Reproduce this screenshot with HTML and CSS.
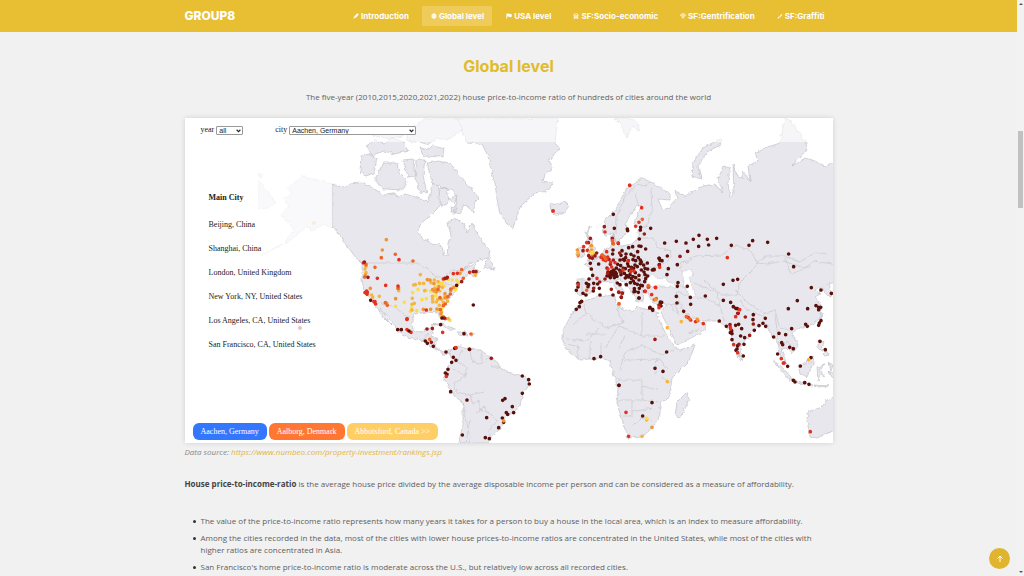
FILE: index.html
```html
<!DOCTYPE html>
<html lang="en">
<head>
<meta charset="utf-8">
<title>GROUP8 - Global level</title>
<link rel="stylesheet" href="styles.css">
</head>
<body>
<div class="page">
<header class="header">
  <div class="container header-row">
    <a class="logo" href="#top">GROUP8</a>
    <nav class="nav">
      <a href="#introduction"><svg viewBox="0 0 16 16"><path d="M1 15l1-5 3.500 3.500zM3 9l7.500-7.500q2-1 3.500.5t.5 3.500L7 13z"/></svg>Introduction</a>
      <a class="active" href="#global"><svg viewBox="0 0 16 16"><circle cx="8" cy="8" r="7" opacity=".6"/><path class="line" d="M8 1v14M1 8h14M3 4h10M3 12h10M8 1q-7 7 0 14M8 1q7 7 0 14"/></svg>Global level</a>
      <a href="#usa"><svg viewBox="0 0 16 16"><path d="M1 1h2v1q3-2 6 0t6 0v8q-3 2-6 0t-6 0v5H1z"/></svg>USA level</a>
      <a href="#socio"><svg viewBox="0 0 16 16"><path class="line" d="M2 6q0-4 3-4h6q3 0 3 4M1 6h14M2 9h12M2 12h12M1 15h14M4 6v8M8 6v8M12 6v8"/></svg>SF:Socio-economic</a>
      <a href="#gentrification"><svg viewBox="0 0 16 16"><path class="line" d="M4 2h8l3 4-7 8-7-8zM1 6h14M5 6l3 8 3-8-3-4z"/></svg>SF:Gentrification</a>
      <a href="#graffiti"><svg viewBox="0 0 16 16"><path d="M15 1q-5 2-9 8l2 2q5-4 7-10zM5 10q-3 0-3 3l-1 2q5 0 6-3z"/></svg>SF:Graffiti</a>
    </nav>
  </div>
</header>
<main class="container" id="global">
  <h2>Global level</h2>
  <p class="subtitle">The five-year (2010,2015,2020,2021,2022) house price-to-income ratio of hundreds of cities around the world</p>
  <section class="map-card">
    <svg class="map" viewBox="185 118 648 325" role="img" aria-label="World map of price-to-income ratios">
      <defs>
        <filter id="coast" x="0" y="0" width="100%" height="100%"><feTurbulence type="fractalNoise" baseFrequency=".22" numOctaves="2" seed="4"/><feDisplacementMap in="SourceGraphic" scale="4" xChannelSelector="R" yChannelSelector="G"/></filter>
      </defs>
      <g filter="url(#coast)">
        <g class="land">
          <path d="M332 184L344 188 350 183 362 182 371 187 384 195 394 194 400 197 405 194 413 196 427 202 431 194 433 182 438 187 442 203 436 210 430 216 420 224 418 234 426 240 433 243 442 246 444 256 447 256 448 244 451 236 448 223 455 218 463 223 467 233 472 223 476 231 482 241 490 251 488 258 476 261 468 265 463 270 476 263 473 269 481 271 474 277 469 274 462 280 458 285 453 295 448 300 443 307 440 312 445 321 441 319 438 313 427 312 415 314 412 320 413 330 421 333 426 329 433 328 431 336 437 338 435 347 443 352 453 349 451 355 443 354 433 348 425 342 417 339 407 337 402 335 396 327 386 315 380 308 391 325 383 317 376 306 369 298 364 290 362 280 362 264 357 259 347 246 337 231 332 228 324 224 312 231 307 226 294 238 262 255 284 243 294 229 289 224 281 214 289 206 284 199 292 194 287 188 302 176z"/>
          <path d="M258 179L276 204 268 208 258 209zM258 173l5 2-3 4zM361 156l8-2 8 4-3 15-8 3-6-5zM376 177l8-14 13 0 2 10 8 8-4 9-19-1-8-6zM366 146l10-6 8 3 8-5 12 4 4 9-14 3-10-3-12 4zM372 135l16-8 12 4 8-7-5 12-18 3zM403 160l10-1 2 17-7 1zM416 160l9 0-2 15 4 18-7-1-5-14zM420 147l8 3 4-4 12 2-1 9-20-1zM408 128l20-10 40 0-5 12-14 9-12 0-10 5-20-4zM427 163l11-2 12 2 10 13 19 22-5 5 0 9-10-8-4 10-6-2 3-9-3-12-13-4-9-4zM440 188l7 0 2 14-7 5-3-10zM448 198l9-2-2 8zM451 208l5-1 0 6-4 0zM483 268l6-11 6 12-5-1z"/>
          <path d="M457 118L467 143 482 144 488 156 492 173 495 183 497 199 500 214 507 224 513 228 518 213 523 204 535 193 547 191 553 183 543 181 545 175 553 168 549 160 555 153 560 149 555 143 558 118z"/>
          <path d="M550 204l7 0 8-2 4 4-6 8-8 0-4-3zM590 226l-4 6 2 6 5 1-1 5 3 5 1 6 2 3-5 1-6 2 3-6-3-4 3-5-4-7zM577 250l5-4 3 4-2 7-6 1zM615 118l7 9 5 11 5-12 7 6 0-8-8-6z"/>
          <path d="M455 347L460 346 470 349 480 350 486 354 492 358 498 363 500 368 508 372 523 376 529 380 528 387 523 393 520 405 513 413 505 417 503 423 497 432 490 439 487 443 459 443 461 432 463 420 463 402 455 397 447 383 443 378 445 372 452 362 450 353z"/>
          <path d="M603 230L605 220 615 210 622 197 628 187 638 181 642 178 653 183 670 194 670 200 658 199 663 211 668 208 677 198 675 191 685 196 703 186 715 184 723 193 718 179 723 166 730 168 728 183 730 198 734 193 733 164 737 176 743 179 743 171 750 181 748 166 758 161 755 153 765 148 780 143 785 118 793 123 806 143 807 149 792 166 805 158 815 161 825 166 836 161 836 282 828 284 832 297 826 294 823 287 815 290 820 294 815 297 822 308 820 318 813 324 797 329 792 333 798 346 792 354 786 348 781 349 787 364 781 358 778 343 772 336 767 326 762 323 752 332 743 343 739 357 735 348 729 328 717 321 703 321 690 317 683 311 693 322 698 321 707 325 703 331 692 338 677 345 670 331 661 313 666 304 653 303 648 293 642 291 643 302 638 302 630 289 620 279 615 280 624 291 621 296 613 284 606 281 598 283 592 292 585 296 577 294 577 279 592 279 592 269 584 264 591 262 598 258 604 250 611 246 610 237 614 234 616 243 621 246 632 244 638 238 638 230 648 226 637 227 634 224 637 217 641 206 637 205 632 213 626 222 627 231 622 238 617 243 612 233 605 236z"/>
          <path d="M583 301L598 297 614 295 618 307 632 312 637 307 653 311 659 313 657 316 667 336 676 348 680 350 695 345 689 361 672 378 670 397 660 403 660 415 652 428 642 437 628 438 622 420 617 403 618 387 613 373 610 361 600 358 580 360 570 353 563 343 563 330 573 312zM687 392l2 8-8 17-6-1 2-14z"/>
          <path d="M692 176l1-13 10-15 19-10-2 7-13 7-9 14 3 13zM773 360l9 7 9 10 1 4-6-4zM792 380l10 2 11 3-1 1-18-4zM814 385l16 1-12 1zM798 368l14-12 3 5-4 7-4 9-7-4zM817 367l8-2-5 4 4 8-4-3-2 7zM818 340l6 2-2 9-4-4zM825 349l4 6-5 1zM829 362l4 3-2 6zM740 352l4 4-2 5-3-4zM828 371l8 3 0 9zM835 395l-8 5-5 7-14 5-1 8 3 17 7 1 18-8zM432 325l11-2 12 7-6 0-7-5zM457 332l9 0 2 4-9-1zM471 334l4 0-3 2zM820 313l3 0-2 7z"/>
        </g>
        <g class="water">
          <path d="M645 280l7-6 8 5 5-2 3 5 10 3-3 2-13-1-11 1zM682 272l8-3 4 5-5 4 4 9 3 10-6 2-5-12z"/>
        </g>
        <g class="borders">
          <path d="M365 263H417L427 268 436 277 444 277 453 270 460 271M376 302L385 305 394 306 403 314 411 318M332 184V228M422 342l6-8M431 345l6-7M443 282l8 2M468 265l-6 8"/>
          <path d="M463 350l-6 12 10 5-1 8-14-6M466 375l-12 9 3 8 13 3 3 9M463 402l8 42M470 350l2 12 10 3 6-8M482 350v15M490 358l3 9 7 0M473 404l6-4 0 8 11 6 8 8M484 392l-14 3M470 420l-4 23M490 414l-6-7-8 6M498 420l-9 11 2 10"/>
          <path d="M616 234l1-18 8-19 12-13 8 2 6-4M635 194l4 12M651 188l1 22-6 16M638 238h15l4 8 14 5-2 10-16 7-13-4-6-16M622 246v19l-16 10M614 258l20 4 12-2M607 251l5 14-6 9M617 264l20 9M592 279l15 3M582 280v16M628 274l5 12M637 273l-1 16M643 275l-4 16M624 258l5-6M644 291l7-6M678 285l9 3"/>
          <path d="M684 262l12-6 26-1 13-10 16 6 6 12 10 1 16-3 22 7 9-7 19 3M682 272l-2-9 8-1M756 264l10-8 20 0 14 6 15-10 12 2M757 265l-16 16-4 14-16 0-18-15M694 283l23 9 3 14 4 14M696 298l9 0 15 8M683 311l-6-19 15 6M661 306l15-2M668 303l11 12M675 303l3 10M735 290l14 14 16 10 10-4 4 16M740 300l6 9 19 8-1 7M775 315l4 29 10-3 4 10M790 330l-10-2M688 333l12-4M798 366l15-4M785 258l6 16 20-8"/>
          <path d="M583 304l3 9-13 12M586 313l20 15 17-5-7-18M599 329l-14 12-18-2M606 334h-20M642 312v24l-23-10-14 22M642 336h22M619 348l6-13M642 345l-18 8-4 18M642 345l20 10 13-6M624 360l36-1 8 10M618 380h24v20H618M642 386l16 4M642 400l16 2M632 400v16h-9M632 412l20-4M634 425l8-8 10 4M660 376l12 8M578 344v15M590 341v18M601 343v15M568 344l12 4M657 358l-2 16"/>
        </g>
      </g>
      <g class="dots" transform="translate(355 230) scale(.3333)">
        <path class="c6" d="M262 160h0M247 168h0M189 178h0M173 188h0M213 181h0M201 209h0M214 206h0M148 217h0M122 229h0M185 242h0M170 234h0M233 213h0M242 197h0M260 238h0M247 241h0M285 271h0M256 160h0M305 151h0M311 158h0M302 179h0M280 148h0M268 168h0M292 150h0M166 244h0M270 148h0M227 183h0M253 158h0"/>
        <path class="c5" d="M206 160h0M194 160h0M181 164h0M176 165h0M228 158h0M238 150h0M209 182h0M172 205h0M178 220h0M171 223h0M171 240h0M237 184h0M254 183h0M73 199h0M30 117h0M33 128h0M131 182h0M50 195h0M53 202h0M240 174h0M249 155h0M262 172h0M232 199h0M233 207h0M244 216h0M253 226h0M260 246h0M258 255h0M280 266h0M361 136h0M196 134h0M278 214h0M248 209h0M270 199h0M259 208h0M265 217h0M233 216h0"/>
        <path class="c4" d="M94 29h0M82 60h0M33 108h0M46 175h0M95 220h0M122 206h0M227 238h0M205 238h0M246 237h0M237 161h0M241 181h0M252 170h0M270 204h0M287 182h0M296 172h0M265 260h0M258 250h0M315 130h0M131 174h0M31 135h0M244 186h0M217 149h0M233 179h0M270 191h0M225 150h0M273 203h0M287 178h0"/>
        <path class="c3" d="M79 83h0M121 73h0M174 93h0M60 112h0M33 103h0M97 226h0M255 203h0M288 177h0M286 192h0M265 227h0M271 222h0M320 119h0M325 145h0M29 141h0M129 175h0M271 266h0M256 239h0M224 328h0M348 312h0M249 178h0M91 218h0M37 189h0M279 200h0"/>
        <path class="c2" d="M132 89h0M25 99h0M67 145h0M92 166h0M129 168h0M35 183h0M30 188h0M37 186h0M62 222h0M60 215h0M156 268h0M156 299h0M168 307h0M214 240h0M263 307h0M295 131h0M307 130h0M265 147h0M344 127h0M36 193h0M57 215h0M275 145h0M302 354h0"/>
        <path class="c1" d="M39 142h0M277 142h0M320 155h0M355 125h0M363 125h0M216 297h0M232 295h0M268 264h0M270 145h0M229 337h0M28 96h0"/>
        <path class="c0" d="M355 225h0M305 166h0M47 211h0M128 299h0M139 299h0M162 303h0M257 284h0M211 333h0M217 340h0M235 349h0M327 311h0M343 358h0M261 264h0"/>
      </g>
      <g class="dots" transform="translate(400 280) scale(.3333)">
        <path class="c0" d="M138 216h0M160 232h0M168 241h0M155 247h0M144 268h0M136 279h0M141 283h0M152 335h0M201 360h0M209 208h0M164 205h0M367 288h0M386 299h0M388 312h0M367 340h0M308 361h0M315 356h0M337 380h0M341 398h0M319 398h0M323 403h0M307 414h0M311 427h0M260 413h0M296 443h0M187 465h0M256 473h0M268 476h0M582 236h0M602 230h0M529 88h0M538 80h0M540 68h0M545 64h0M657 316h0"/>
        <path class="c1" d="M274 235h0"/><path class="c2" d="M168 203h0M139 289h0"/><path class="c4" d="M311 423h0"/>
      </g>
      <g class="dots" transform="translate(615 280) scale(.3333)">
        <path class="c0" d="M325 13h0M271 48h0M325 61h0M347 67h0M226 52h0M227 73h0M217 19h0M189 8h0M187 19h0M184 49h0M186 69h0M206 94h0M105 82h0M113 91h0M155 216h0M120 265h0M144 274h0M111 368h0M83 408h0M12 316h0M313 123h0M355 80h0M362 85h0M367 86h0M415 104h0M414 119h0M451 115h0M444 130h0M452 139h0M432 137h0M418 151h0M334 139h0M362 136h0M371 133h0M380 146h0M350 152h0M346 158h0M351 161h0M377 168h0M389 173h0M351 179h0M368 197h0M366 207h0M363 211h0M387 193h0M385 228h0M476 171h0M492 160h0M512 164h0M530 146h0M500 188h0M503 194h0M524 202h0M535 206h0M488 222h0M518 259h0M556 258h0M588 233h0M535 301h0M540 306h0M569 308h0M582 313h0M589 23h0M618 30h0M649 40h0M547 62h0M520 86h0M578 86h0M603 77h0M611 82h0M617 82h0M611 89h0M618 122h0M613 129h0M611 136h0M572 133h0M577 139h0M615 184h0M631 209h0M136 66h0M135 74h0M140 67h0M138 78h0M60 34h0M70 37h0M72 54h0M19 52h0"/>
        <path class="c1" d="M120 178h0M415 132h0M404 166h0M345 134h0M370 100h0M391 111h0M132 76h0M372 193h0M507 249h0M368 100h0M89 34h0"/>
        <path class="c2" d="M374 89h0M362 110h0M346 142h0M347 147h0M356 194h0M368 218h0M33 397h0M41 469h0M586 455h0M220 113h0M227 120h0M242 125h0M265 131h0M122 23h0M100 21h0M22 40h0M12 36h0M499 236h0M132 83h0M505 249h0M110 44h0"/>
        <path class="c3" d="M214 110h0M224 117h0M248 122h0M118 59h0M124 56h0M12 72h0"/><path class="c4" d="M111 442h0M122 59h0M247 118h0"/>
        <path class="c5" d="M157 143h0M199 125h0M157 305h0M81 469h0M581 239h0M95 420h0"/><path class="c6" d="M95 415h0"/>
      </g>
      <g class="dots" transform="translate(615 116) scale(.3333)">
        <path class="c0" d="M149 381h0M184 376h0M213 381h0M235 370h0M252 358h0M277 370h0M305 367h0M281 387h0M251 391h0M218 406h0M349 388h0M402 388h0M413 374h0M458 379h0M521 414h0M536 452h0M187 446h0M157 420h0M160 458h0M156 476h0M132 427h0M141 434h0M133 446h0M354 493h0M368 490h0M117 461h0"/>
        <path class="c1" d="M195 421h0"/><path class="c2" d="M337 425h0M44 208h0"/>
      </g>
      <g class="dots" transform="translate(565 180) scale(.3333)">
        <path class="c0" d="M145 103h0M148 145h0M187 147h0M188 152h0M227 142h0M226 150h0M257 145h0M223 177h0M191 203h0M203 200h0M222 198h0M228 199h0M242 207h0M171 212h0M218 215h0M183 222h0M198 223h0M207 228h0M168 226h0M144 210h0M143 222h0M175 238h0M182 233h0M178 241h0M165 240h0M158 253h0M167 257h0M190 258h0M199 262h0M204 239h0M212 242h0M220 233h0M229 246h0M226 251h0M226 240h0M247 249h0M236 255h0M188 251h0M210 255h0M217 260h0M240 265h0M229 270h0M267 268h0M262 270h0M248 267h0M206 265h0M193 272h0M211 278h0M222 286h0M178 280h0M168 284h0M185 287h0M195 284h0M204 290h0M199 295h0M190 291h0M212 293h0M222 300h0M205 303h0M196 308h0M209 310h0M217 313h0M181 294h0M170 273h0M181 266h0M175 265h0M163 270h0M154 264h0M146 270h0M140 274h0M151 276h0M144 281h0M154 281h0M147 287h0M138 285h0M131 287h0M126 288h0M136 293h0M148 293h0M156 289h0M134 280h0M129 276h0M240 284h0M248 288h0M242 296h0M239 305h0M237 276h0M283 235h0M285 241h0M76 250h0M101 252h0M79 267h0M83 286h0M72 297h0M64 310h0M71 314h0M69 320h0M39 310h0M39 321h0M34 331h0M54 340h0M63 345h0M86 310h0M98 312h0M103 325h0M85 333h0M105 345h0M144 345h0M157 309h0M165 314h0M184 314h0M208 326h0M207 335h0M222 354h0M223 325h0M227 316h0M232 317h0M254 384h0M263 388h0"/>
        <path class="c1" d="M70 188h0M76 175h0M118 140h0M238 162h0M71 227h0M75 233h0M82 235h0M90 228h0M95 219h0M54 212h0M160 190h0M142 175h0M145 240h0M136 253h0M120 297h0M86 325h0M104 306h0M128 280h0M139 328h0M161 337h0M172 339h0M169 351h0M190 242h0M164 219h0M132 238h0M126 264h0M199 267h0M283 255h0M84 224h0M166 276h0"/>
        <path class="c2" d="M194 16h0M230 83h0M222 127h0M212 139h0M120 156h0M56 200h0M65 188h0M67 211h0M144 190h0M160 189h0M125 215h0M108 232h0M115 239h0M126 238h0M137 246h0M150 248h0M189 243h0M140 261h0M129 268h0M174 270h0M197 275h0M207 273h0M96 295h0M40 314h0M241 334h0M251 320h0M271 322h0M284 262h0M113 230h0M122 242h0M111 226h0M119 234h0M128 231h0"/>
        <path class="c3" d="M232 118h0M143 182h0M145 192h0M118 230h0M122 237h0M112 225h0M65 331h0M250 317h0M162 371h0M40 226h0"/><path class="c4" d="M79 197h0M37 210h0M80 210h0M40 224h0"/><path class="c5" d="M39 218h0M76 215h0M82 222h0"/><path class="c6" d="M80 218h0M84 216h0"/>
      </g>
      <path class="c5 dot" d="M314 223h0"/><path class="c1 dot" d="M300 328h0"/><path class="c2 dot" d="M553 211h0"/><path class="c2 dot" d="M407 319h0"/>
    </svg>
    <div class="filters">
      <label for="year">year</label>
      <span class="pick year"><select id="year"><option>all</option></select><svg viewBox="0 0 8 6"><path d="M1 1l3 3 3-3"/></svg></span>
      <label class="city-label" for="city">city</label>
      <span class="pick city"><select id="city"><option>Aachen, Germany</option></select><svg viewBox="0 0 8 6"><path d="M1 1l3 3 3-3"/></svg></span>
    </div>
    <div class="cities">
      <h3>Main City</h3>
      <ul>
        <li>Beijing, China</li>
        <li>Shanghai, China</li>
        <li>London, United Kingdom</li>
        <li>New York, NY, United States</li>
        <li>Los Angeles, CA, United States</li>
        <li>San Francisco, CA, United States</li>
      </ul>
    </div>
    <div class="chips">
      <button class="blue" type="button">Aachen, Germany</button>
      <button class="orange" type="button">Aalborg, Denmark</button>
      <button class="gold" type="button">Abbotsford, Canada &gt;&gt;</button>
    </div>
  </section>
  <p class="source">Data source: <a href="#source">https://www.numbeo.com/property-investment/rankings.jsp</a></p>
  <p class="definition"><strong>House price-to-income-ratio</strong> is the average house price divided by the average disposable income per person and can be considered as a measure of affordability.</p>
  <ul class="notes">
    <li>The value of the price-to-income ratio represents how many years it takes for a person to buy a house in the local area, which is an index to measure affordability.</li>
    <li>Among the cities recorded in the data, most of the cities with lower house prices-to-income ratios are concentrated in the United States, while most of the cities with higher ratios are concentrated in Asia.</li>
    <li>San Francisco's home price-to-income ratio is moderate across the U.S., but relatively low across all recorded cities.</li>
  </ul>
</main>
<a class="to-top" href="#top" aria-label="Back to top"><svg viewBox="0 0 16 16"><path d="M8 14V3M3 7l5-5 5 5"/></svg></a>
</div>
<div class="scrollbar"><i class="up"></i><div class="track"><div class="thumb"></div></div><i class="down"></i></div>
</body>
</html>
```
FILE: styles.css
```css
* { box-sizing: border-box; }
body {
  margin: 0;
  display: flex;
  height: 100vh;
  overflow: hidden;
  background: #f1f1f1;
  color: #606060;
  font: 8px/12px "Open Sans", "Noto Sans", sans-serif;
}
a { color: inherit; text-decoration: none; }
.page { flex: 1; min-width: 0; position: relative; overflow: hidden; }
.container { max-width: 648px; margin: 0 auto; }
.header { background: #e8be33; color: #fff; }
.header-row { display: flex; align-items: center; justify-content: space-between; height: 32px; }
.logo { font: 800 12px/16px Inter, sans-serif; }
.nav { display: flex; gap: 5px; font-family: Inter, sans-serif; font-weight: 700; }
.nav a { display: flex; align-items: center; gap: 2px; height: 20px; padding: 0 8px 0 9px; border-radius: 1px; white-space: nowrap; }
.nav .active { background: #eecb5b; }
.nav svg { width: 6px; height: 6px; fill: #fff; }
.nav .line { fill: none; stroke: #fff; stroke-width: 1.5; }
h2 { margin: 24px 0 15px; color: #e0bc2d; font: 700 16px/20px Inter, sans-serif; text-align: center; }
.subtitle { margin: 0 0 15px; text-align: center; }
.map-card { position: relative; background: #fff; box-shadow: 0 0 5px rgba(0, 0, 0, .14); overflow: hidden; font-family: "Liberation Serif", serif; color: #222; }
.map { display: block; width: 100%; }
.land { fill: #e8e7ed; stroke: #b9b9bf; stroke-width: .6; }
.water { fill: #fff; stroke: #c3c3c8; stroke-width: .5; }
.borders { fill: none; stroke: #c2c2c8; stroke-width: .6; }
.dots path { stroke-width: 11; }
.dots path, .dot { fill: none; stroke-linecap: round; }
.dot { stroke-width: 4; }
.c0 { stroke: #5a100b; }
.c1 { stroke: #9c1c17; }
.c2 { stroke: #e2321f; }
.c3 { stroke: #ec6529; }
.c4 { stroke: #ef9433; }
.c5 { stroke: #f4b63e; }
.c6 { stroke: #fbdd4c; }
.filters { position: absolute; inset: 0 0 auto; display: flex; align-items: center; height: 24px; padding-left: 16px; background: rgba(255, 255, 255, .6); }
.pick { position: relative; height: 9px; margin-left: 2px; }
.pick select { display: block; width: 100%; height: 9px; padding: 0 2px; appearance: none; border: 1px solid #999; border-radius: 1px; background: #fff; color: #222; font: 7px/7px "Liberation Sans", sans-serif; }
.pick svg { position: absolute; right: 2px; top: 3px; width: 5px; height: 4px; fill: none; stroke: #222; stroke-width: 1.8; pointer-events: none; }
.year { width: 27px; }
.city { width: 127px; }
.city-label { margin-left: 32px; }
.cities { position: absolute; inset: 24px auto 0 0; width: 147px; padding: 50px 0 0 24px; background: rgba(255, 255, 255, .75); white-space: nowrap; }
.cities h3 { margin: 0 0 15px; font-size: 8px; line-height: 12px; }
.cities ul { display: grid; gap: 12px; margin: 0; padding: 0; list-style: none; }
.chips { position: absolute; left: 8px; bottom: 3px; display: flex; gap: 2px; }
.chips button { height: 17px; padding: 0 8px; border: 0; border-radius: 6px; color: #fff; font: 8px/12px "Liberation Serif", serif; }
.chips .blue { background: #3377ff; }
.chips .orange { background: #ff7733; }
.chips .gold { background: #ffcf66; }
.source { margin: 3px 0 20px; color: #888; font-style: italic; }
.source a { color: #e4b53c; }
.definition { margin: 0 0 25px; }
.definition strong { color: #444; }
.notes { display: grid; gap: 5px; margin: 0; padding: 0 0 0 8px; list-style: none; }
.notes li { display: flex; gap: 5px; }
.notes li::before { content: ""; flex: none; width: 3px; height: 3px; margin-top: 5px; border-radius: 50%; background: #333; }
.to-top { position: absolute; right: 7px; bottom: 7px; display: grid; place-items: center; width: 21px; height: 21px; border-radius: 50%; background: #e0b52d; }
.to-top svg { width: 8px; height: 8px; fill: none; stroke: #fff; stroke-width: 2; }
.scrollbar { display: flex; flex-direction: column; align-items: center; justify-content: space-between; width: 7px; padding: 3px 0; background: #f2f2f2; }
.track { flex: 1; width: 5px; padding-top: 126px; }
.thumb { height: 77px; background: #c1c1c1; }
.up, .down { border: 2px solid transparent; }
.up { border-top: 0; border-bottom-color: #555; }
.down { border-bottom: 0; border-top-color: #555; }
```
